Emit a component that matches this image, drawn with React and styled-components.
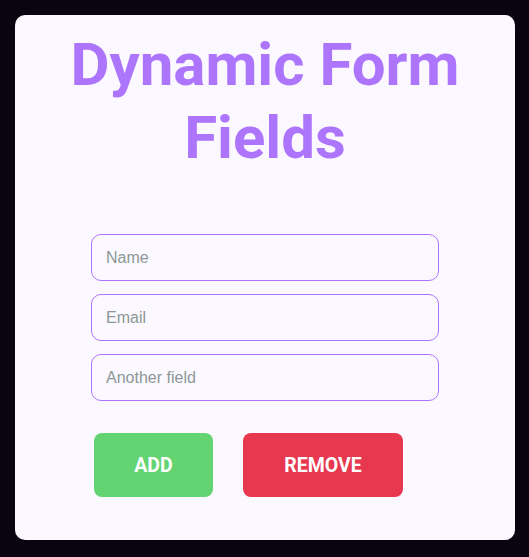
import React from 'react'
import styled, { createGlobalStyle } from 'styled-components'

const GlobalStyle = createGlobalStyle`
  html, body {
    margin: 0;
    padding: 0;
    background-color: #09040f;
  }
  body {
    font-family: Roboto, "Liberation Sans", sans-serif;
  }
`

function App() {
  return (
    <Page>
      <GlobalStyle />
      <Card>
        <Title>Dynamic Form Fields</Title>
        <Form onSubmit={(e) => e.preventDefault()}>
          <Field type="text" placeholder="Name" />
          <Field type="email" placeholder="Email" />
          <Field type="text" placeholder="Another field" />
          <Buttons>
            <Button type="button" $color="#63d471" $width="119px">ADD</Button>
            <Button type="button" $color="#e83850" $width="160px">REMOVE</Button>
          </Buttons>
        </Form>
      </Card>
    </Page>
  )
}

export default App

const Page = styled.div`
  padding: 15px;
  min-height: 557px;
  box-sizing: border-box;
`
const Card = styled.div`
  width: 500px;
  height: 525px;
  box-sizing: border-box;
  padding-top: 13px;
  background-color: #fbf8ff;
  border-radius: 10px;
  display: flex;
  flex-direction: column;
  align-items: center;
`
const Title = styled.h1`
  margin: 0;
  width: 420px;
  text-align: center;
  font-family: Roboto, sans-serif;
  font-weight: 700;
  font-size: 60px;
  line-height: 73px;
  color: #ad75fc;
`
const Form = styled.form`
  margin-top: 60px;
  width: 348px;
  display: flex;
  flex-direction: column;
  gap: 13px;
`
const Field = styled.input`
  width: 100%;
  height: 47px;
  box-sizing: border-box;
  padding: 0 14px;
  border: 1px solid #ad75fc;
  border-radius: 10px;
  background-color: #fbf8ff;
  font-family: "Liberation Sans", Arial, sans-serif;
  font-size: 16px;
  color: #333;
  outline: none;
  &::placeholder {
    color: #8c9896;
  }
`
const Buttons = styled.div`
  margin-top: 19px;
  padding-left: 3px;
  display: flex;
  gap: 30px;
`
const Button = styled.button`
  width: ${(p) => p.$width};
  height: 64px;
  border: none;
  border-radius: 8px;
  background-color: ${(p) => p.$color};
  color: #fff;
  font-family: Roboto, sans-serif;
  font-weight: 700;
  font-size: 19.5px;
  cursor: pointer;
`
